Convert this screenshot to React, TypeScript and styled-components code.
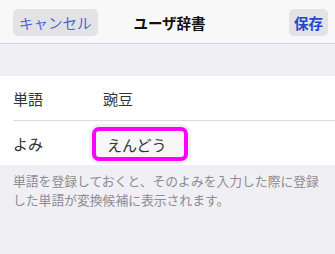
import React from 'react';
import styled, { createGlobalStyle } from 'styled-components';

const GlobalStyle = createGlobalStyle`
    html, body {
        margin: 0;
        padding: 0;
        background: #efeff4;
    }
    body {
        font-family: "Noto Sans CJK JP", "Noto Sans", sans-serif;
        -webkit-font-smoothing: antialiased;
    }
`;

const Screen = styled.div`
    width: 335px;
    height: 254px;
    display: flex;
    flex-direction: column;
    background: #efeff4;
    overflow: hidden;
`;

const NavBar = styled.div`
    height: 44px;
    box-sizing: border-box;
    display: flex;
    align-items: center;
    justify-content: space-between;
    padding: 1px 7px 0 13px;
    background: #f8f8f8;
    border-bottom: 1px solid #d3d2dc;
    position: relative;
`;

const NavButton = styled.button<{ $bold?: boolean }>`
    height: 27px;
    padding: 0 ${(p) => (p.$bold ? '5px' : '6px')};
    border: none;
    border-radius: 5px;
    background: #e3e3e6;
    font-family: inherit;
    font-size: 14.5px;
    font-weight: ${(p) => (p.$bold ? 700 : 400)};
    color: ${(p) => (p.$bold ? '#2547cf' : '#4a68d6')};
    line-height: 27px;
    letter-spacing: 0;
`;

const Title = styled.div`
    position: absolute;
    left: 0;
    right: 0;
    text-align: center;
    pointer-events: none;
    font-size: 14.5px;
    font-weight: 700;
    color: #111;
    padding-left: 4px;
`;

const Spacer = styled.div`
    height: 32px;
`;

const Section = styled.div`
    background: #ffffff;
    display: flex;
    flex-direction: column;
`;

const Row = styled.div<{ $divider?: boolean }>`
    height: 44px;
    display: flex;
    align-items: center;
    margin-left: 13px;
    border-bottom: ${(p) => (p.$divider ? '1px solid #dcdce0' : 'none')};
`;

const Label = styled.div`
    width: 79px;
    font-size: 15px;
    color: #333333;
`;

const Value = styled.div`
    padding-left: 11px;
    font-size: 15px;
    color: #333333;
`;

const InputBox = styled.div`
    width: 96px;
    height: 34px;
    box-sizing: border-box;
    margin-top: 2px;
    display: flex;
    align-items: center;
    padding-left: 11px;
    border: 4px solid #ff00ff;
    border-radius: 7px;
    background: #f6f6f7;
    box-shadow: 0 0 0 3px #f1f1f4;
    font-size: 15px;
    color: #333333;
`;

const Note = styled.p`
    margin: 0;
    padding: 6px 12px 0 13px;
    font-size: 12.8px;
    line-height: 19px;
    color: #8c8c92;
`;

export default function App() {
    return (
        <Screen>
            <GlobalStyle />
            <NavBar>
                <NavButton>キャンセル</NavButton>
                <Title>ユーザ辞書</Title>
                <NavButton $bold>保存</NavButton>
            </NavBar>
            <Spacer />
            <Section>
                <Row $divider>
                    <Label>単語</Label>
                    <Value>豌豆</Value>
                </Row>
                <Row>
                    <Label>よみ</Label>
                    <InputBox>えんどう</InputBox>
                </Row>
            </Section>
            <Note>
                単語を登録しておくと、そのよみを入力した際に登録した単語が変換候補に表示されます。
            </Note>
        </Screen>
    );
}
